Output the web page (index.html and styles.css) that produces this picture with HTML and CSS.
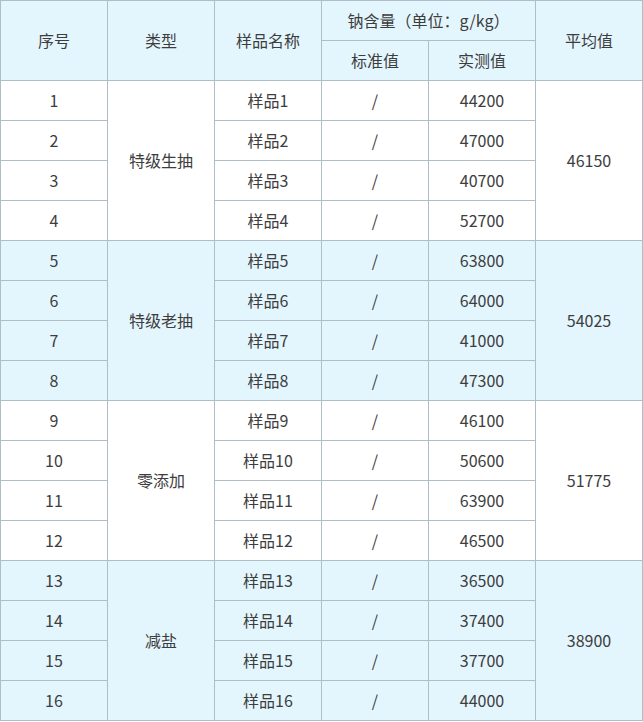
FILE: index.html
```html
<!DOCTYPE html>
<html lang="zh">
<head>
<meta charset="utf-8">
<link rel="stylesheet" href="styles.css">
</head>
<body>
<table class="tbl">
  <colgroup><col><col><col><col><col><col></colgroup>
  <thead>
    <tr>
      <th rowspan="2">序号</th>
      <th rowspan="2">类型</th>
      <th rowspan="2">样品名称</th>
      <th colspan="2">钠含量（单位：g/kg）</th>
      <th rowspan="2">平均值</th>
    </tr>
    <tr>
      <th>标准值</th>
      <th>实测值</th>
    </tr>
  </thead>
  <tbody class="g-white">
    <tr><td>1</td><td rowspan="4">特级生抽</td><td>样品1</td><td>/</td><td>44200</td><td rowspan="4">46150</td></tr>
    <tr><td>2</td><td>样品2</td><td>/</td><td>47000</td></tr>
    <tr><td>3</td><td>样品3</td><td>/</td><td>40700</td></tr>
    <tr><td>4</td><td>样品4</td><td>/</td><td>52700</td></tr>
  </tbody>
  <tbody class="g-blue">
    <tr><td>5</td><td rowspan="4">特级老抽</td><td>样品5</td><td>/</td><td>63800</td><td rowspan="4">54025</td></tr>
    <tr><td>6</td><td>样品6</td><td>/</td><td>64000</td></tr>
    <tr><td>7</td><td>样品7</td><td>/</td><td>41000</td></tr>
    <tr><td>8</td><td>样品8</td><td>/</td><td>47300</td></tr>
  </tbody>
  <tbody class="g-white">
    <tr><td>9</td><td rowspan="4">零添加</td><td>样品9</td><td>/</td><td>46100</td><td rowspan="4">51775</td></tr>
    <tr><td>10</td><td>样品10</td><td>/</td><td>50600</td></tr>
    <tr><td>11</td><td>样品11</td><td>/</td><td>63900</td></tr>
    <tr><td>12</td><td>样品12</td><td>/</td><td>46500</td></tr>
  </tbody>
  <tbody class="g-blue">
    <tr><td>13</td><td rowspan="4">减盐</td><td>样品13</td><td>/</td><td>36500</td><td rowspan="4">38900</td></tr>
    <tr><td>14</td><td>样品14</td><td>/</td><td>37400</td></tr>
    <tr><td>15</td><td>样品15</td><td>/</td><td>37700</td></tr>
    <tr><td>16</td><td>样品16</td><td>/</td><td>44000</td></tr>
  </tbody>
</table>
</body>
</html>
```

FILE: styles.css
```css
html, body {
  margin: 0;
  padding: 0;
  background: #ffffff;
}
body {
  font-family: "Noto Sans CJK SC", "Noto Sans", sans-serif;
  color: #3d3d3d;
  font-size: 16px;
}
.tbl {
  width: 643px;
  border-collapse: collapse;
  table-layout: fixed;
}
.tbl th,
.tbl td {
  border: 1px solid #aebdc6;
  height: 37px;
  padding: 0 0 2px 0;
  text-align: center;
  vertical-align: middle;
  font-weight: normal;
  line-height: 20px;
}
.tbl thead th {
  background: #e4f6fd;
}
.g-blue td {
  background: #e4f6fd;
}
.g-white td {
  background: #ffffff;
}
```
